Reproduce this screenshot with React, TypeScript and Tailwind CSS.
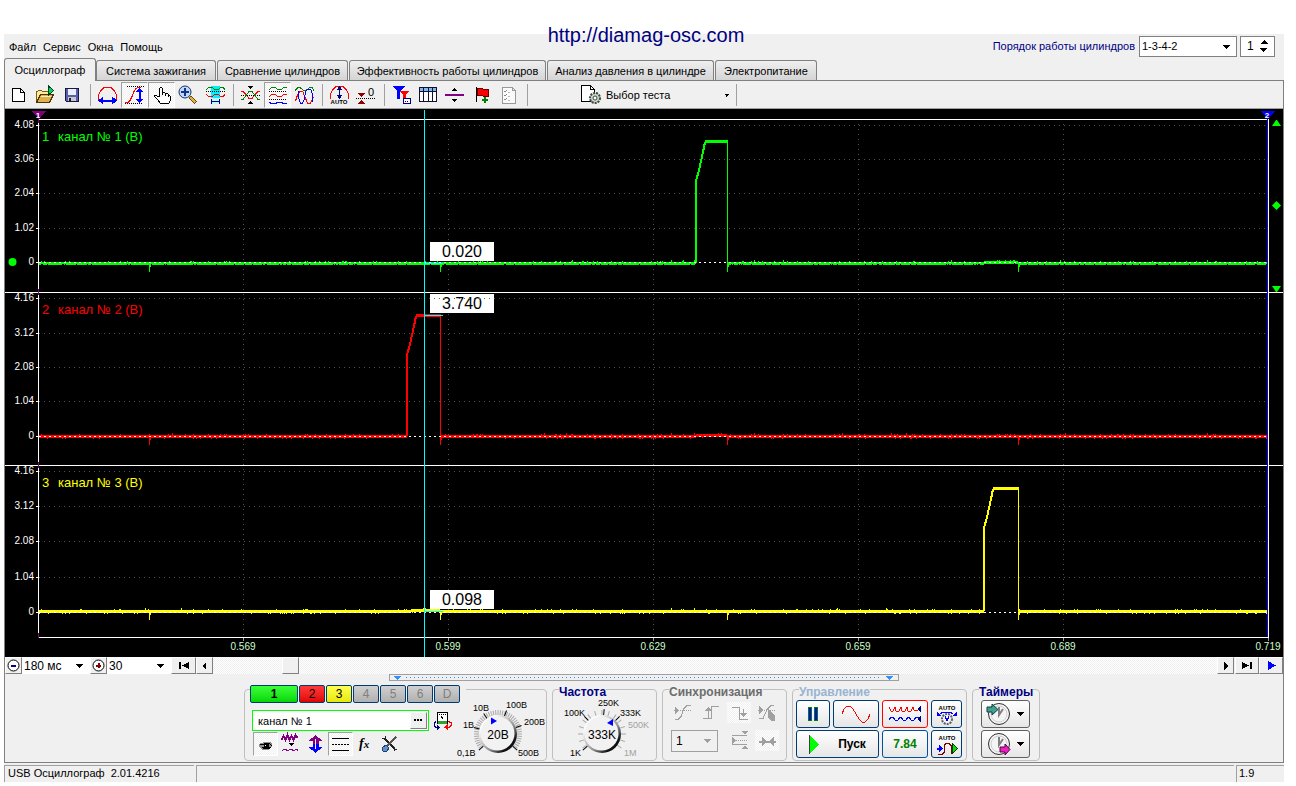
import React, { useState } from "react";

const CHECKER =
  "bg-[repeating-conic-gradient(#ffffff_0_25%,#f0f0f0_0_50%)] bg-[length:2px_2px]";

const tabs = [
  { label: "Осциллограф", width: "w-[92px]" },
  { label: "Система зажигания", width: "w-[120px]" },
  { label: "Сравнение цилиндров", width: "w-[131px]" },
  { label: "Эффективность работы цилиндров", width: "w-[197px]" },
  { label: "Анализ давления в цилиндре", width: "w-[167px]" },
  { label: "Электропитание", width: "w-[102px]" },
];

function Icon({ children, w = 27, h = 26 }: { children: React.ReactNode; w?: number; h?: number }) {
  return (
    <svg
      width={w}
      height={h}
      viewBox={`0 0 ${w} ${h}`}
      fill="none"
      stroke="#000"
      shapeRendering="crispEdges"
      aria-hidden="true"
      className="shrink-0"
    >
      {children}
    </svg>
  );
}

function Caret({ className = "" }: { className?: string }) {
  return (
    <svg width="8" height="4" viewBox="0 0 8 4" shapeRendering="crispEdges" className={className} aria-hidden="true">
      <path d="M0 0h7v1h-1v1h-1v1h-1v1h-1v-1h-1v-1h-1v-1h-1z" fill="currentColor" />
    </svg>
  );
}

/* ---------- toolbar ---------- */

const toolGroups: { name: string; pressed?: boolean; icon: React.ReactNode }[][] = [
  [
    {
      name: "Новый",
      icon: (
        <>
          <path d="M7.5 6.5h8l4 4v9h-12z" fill="#fff" />
          <path d="M15.5 6.5v4h4" />
        </>
      ),
    },
    {
      name: "Открыть",
      icon: (
        <>
          <path d="M4.5 20.5v-11h1l1-1h3l1 1h6v3" fill="#ffe9a0" stroke="#806000" />
          <path d="M4.5 20.5l4-8h13l-4 8z" fill="#e0b050" stroke="#4a3800" />
          <path d="M9 14.5h10" stroke="#fff0b0" />
          <path d="M16.5 4v9l5-4.5z" fill="#00d060" stroke="#004020" />
        </>
      ),
    },
    {
      name: "Сохранить",
      icon: (
        <>
          <path d="M6.5 6.5h13v13h-12l-1-1z" fill="#5560a8" stroke="#181840" />
          <path d="M9 7h8v6h-8z" fill="#e8f0ff" stroke="none" />
          <path d="M9 15h8v4h-8z" fill="#c8c8c8" stroke="none" />
          <path d="M10 16h2v3h-2z" fill="#181840" stroke="none" />
        </>
      ),
    },
  ],
  [
    {
      name: "Ширина",
      icon: (
        <>
          <path d="M4.5 18v-5l2-4 3-3 2-1h4l2 1 3 3 2 4v5" stroke="#f00" />
          <path d="M7 18.5h13" stroke="#00f" strokeWidth="2" />
          <path d="M4 18.5l5-4v8zM23 18.5l-5-4v8z" fill="#00f" stroke="none" />
        </>
      ),
    },
    {
      name: "Высота",
      pressed: true,
      icon: (
        <>
          <path d="M6 4.5h18M4 21.5h18" strokeDasharray="1 1" />
          <path d="M4 20.5h3l2-2 2-4 2-5 2-3 2-1h3" stroke="#f00" />
          <path d="M18.5 8v11" stroke="#00f" strokeWidth="2" />
          <path d="M18.5 6l-4 4h8zM18.5 21l-4-4h8z" fill="#00f" stroke="none" />
        </>
      ),
    },
    {
      name: "Рука",
      pressed: true,
      icon: (
        <path
          d="M11.5 15V6.500l1-1h1l1 1v6M14.5 10.5h2l1 1v2M17.5 11.5h2l1 1v2M20.5 13.5h1l1 1v4l-2 3h-8l-3-4-3-3v-1h2l3 2"
          fill="#fff"
        />
      ),
    },
    {
      name: "Лупа",
      icon: (
        <>
          <path d="M15 15l6 6" stroke="#6b4a10" strokeWidth="4" />
          <path d="M15.5 15.5l5 5" stroke="#e0b040" strokeWidth="2" />
          <circle cx="10" cy="10" r="6" fill="#b8dcff" stroke="#203060" shapeRendering="auto" />
          <path d="M10 6v8M6 10h8" stroke="#203080" strokeWidth="2" />
        </>
      ),
    },
    {
      name: "Окно",
      icon: (
        <>
          <path d="M9 4h9v12h-9z" fill="#00f0ff" stroke="none" />
          <path d="M9 16h9v6h-9z" fill="#c0f8ff" stroke="none" />
          <path d="M4 7.5l3-2h3l3 2h3l3-2h2l2 2" stroke="#008000" />
          <path d="M4 9.500h19" strokeDasharray="1 1" />
          <path d="M4 12.5l3 2h3l3-2h3l3 2h2l2-2" stroke="#f00" />
          <path d="M9.5 17v5M17.5 17v5M10 19.5h7" stroke="#000080" />
        </>
      ),
    },
  ],
  [
    {
      name: "Наложить",
      icon: (
        <>
          <path d="M4 13.5h19" strokeDasharray="1 1" />
          <path d="M4 9.5h2l3 3 3 4h3l3-4 3-3h2" stroke="#f00" />
          <path d="M4 17.500h2l3-4 3-4h3l3 4 3 4h2" stroke="#008000" />
          <path d="M11 4h5l-2.500 3zM11 22h5l-2.500-3z" fill="#000" stroke="none" />
        </>
      ),
    },
    {
      name: "Разделить",
      pressed: true,
      icon: (
        <>
          <path d="M5 7.5l3-2h3l3 2h3l3-2h3" stroke="#008000" />
          <path d="M5 9.5h18M5 17.5h18" strokeDasharray="1 1" />
          <path d="M5 14.5l3-2h3l3 2h3l3-2h3" stroke="#f00" />
          <path d="M5 20.5l3 1h3l3-1h3l3 1h3" stroke="#00f" />
        </>
      ),
    },
    {
      name: "Совместить",
      icon: (
        <>
          <path d="M4 8.5l3-3h2l4 3h2l4-3h2l2 3" stroke="#008000" />
          <path d="M4.5 19l2-6 3-4h2l2 5 3 7h3l3-6" stroke="#f00" />
          <path d="M7.5 9v7l2 5h2l2-4 1-7 2-3h3l2 5v8" stroke="#00f" />
        </>
      ),
    },
  ],
  [
    {
      name: "Авто",
      icon: (
        <>
          <path d="M4.5 17v-5l2-4 3-3 2-1h4l2 1 3 3 2 4v5" stroke="#f00" />
          <path d="M13.500 6v10" stroke="#000080" />
          <path d="M13.500 4l-3 4h6zM13.500 17l-3-4h6z" fill="#000080" stroke="none" />
          <text x="13" y="22" fontSize="6" fontWeight="700" textAnchor="middle" fill="#000" stroke="none">
            AUTO
          </text>
        </>
      ),
    },
    {
      name: "Ноль",
      icon: (
        <>
          <path d="M3 16.5h20" strokeDasharray="1 1" />
          <path d="M4 11h8l-4 4zM4 22h8l-4-4z" fill="#900000" stroke="none" />
          <text x="15" y="14" fontSize="11" fill="#000" stroke="none">
            0
          </text>
        </>
      ),
    },
  ],
  [
    {
      name: "Фильтр",
      icon: (
        <>
          <path d="M4 4h13l-5 5v8h-3v-8z" fill="#00f" stroke="none" />
          <path d="M12 9h9l-3 4v6h-3v-6z" fill="#f00" stroke="none" />
          <path d="M15.5 16.5h7v5h-7z" fill="#fff" stroke="#000080" />
          <path d="M17 19.5h4" stroke="#000080" strokeDasharray="1 1" />
        </>
      ),
    },
    {
      name: "Таблица",
      icon: (
        <>
          <path d="M4.5 5.5h17v14h-17z" fill="#fff" stroke="#101030" />
          <path d="M5 6h16v3h-16z" fill="#80b8f0" stroke="none" />
          <path d="M5 9.500h16M8.500 6v13M13.500 6v13M17.500 6v13" stroke="#101030" />
        </>
      ),
    },
    {
      name: "Линия",
      icon: (
        <>
          <path d="M3 12h19v2h-19z" fill="#800080" stroke="none" />
          <path d="M10 9h5l-2.500-3zM10 17h5l-2.500 3z" fill="#000" stroke="none" />
        </>
      ),
    },
    {
      name: "Метка",
      icon: (
        <>
          <path d="M7.5 5v15" />
          <path d="M8 6h4l2 1h5v7h-5l-2-1h-4z" fill="#f00" stroke="#600" />
          <path d="M16 15v6M13 18h6" stroke="#008000" strokeWidth="2" />
        </>
      ),
    },
    {
      name: "Список",
      icon: (
        <>
          <path d="M6.5 5.5h10l3 3v13h-13z" fill="#fafafa" stroke="#999" />
          <path d="M16.500 5.500v3h3" stroke="#999" />
          <path d="M8 9l1 1 2-2M8 13l1 1 2-2M8 17l1 1 2-2" stroke="#888" />
          <path d="M12 10.500h2M12 14.500h2M12 18.500h2" stroke="#bbb" />
        </>
      ),
    },
  ],
];

function Divider() {
  return (
    <span className="flex w-2 shrink-0 justify-center py-0.5">
      <span className="w-px bg-[#a0a0a0]" />
    </span>
  );
}

function Toolbar() {
  return (
    <div className="flex h-[28px] border-b border-[#a0a0a0] pt-px">
      {toolGroups.map((group, i) => (
        <React.Fragment key={i}>
          {group.map((tool) => (
            <button
              key={tool.name}
              type="button"
              aria-label={tool.name}
              className={
                tool.pressed
                  ? `flex w-[27px] items-center justify-center overflow-hidden border border-t-[#a0a0a0] border-r-white border-b-white border-l-[#a0a0a0] ${CHECKER}`
                  : "flex w-[27px] items-center justify-center overflow-hidden"
              }
            >
              <Icon>{tool.icon}</Icon>
            </button>
          ))}
          <Divider />
        </React.Fragment>
      ))}
      <button type="button" className="ml-12 flex w-[153px] items-center">
        <Icon>
          <path d="M2.5 3.5h9l4 4v12h-13z" fill="#fff" />
          <path d="M11.5 3.5v4h4" />
          <circle cx="16" cy="16" r="5" fill="#c8d8c8" stroke="#404840" strokeWidth="2" strokeDasharray="2 1" shapeRendering="auto" />
          <circle cx="16" cy="16" r="2" fill="#fff" stroke="#404840" shapeRendering="auto" />
        </Icon>
        <span className="flex-1 text-left">Выбор теста</span>
        <Caret className="mr-0.5 w-1.5" />
      </button>
      <Divider />
    </div>
  );
}

/* ---------- oscillogram ---------- */

type Channel = {
  id: number;
  color: string;
  zero: number;
  base: number;
  rise: number;
  fall: number;
  peak: number;
  titleY: number;
  grid: { y: number; label: string }[];
  bump: [number, number];
};

const channels: Channel[] = [
  {
    id: 1,
    color: "#00ff00",
    zero: 262,
    base: 263,
    rise: 695,
    fall: 727,
    peak: 141,
    titleY: 141,
    bump: [983, 1018],
    grid: [
      { y: 125, label: "4.08" },
      { y: 159, label: "3.06" },
      { y: 193, label: "2.04" },
      { y: 228, label: "1.02" },
    ],
  },
  {
    id: 2,
    color: "#ff0000",
    zero: 436,
    base: 436,
    rise: 406,
    fall: 440,
    peak: 315,
    titleY: 314,
    bump: [695, 727],
    grid: [
      { y: 298, label: "4.16" },
      { y: 333, label: "3.12" },
      { y: 367, label: "2.08" },
      { y: 401, label: "1.04" },
    ],
  },
  {
    id: 3,
    color: "#ffff00",
    zero: 612,
    base: 611,
    rise: 983,
    fall: 1018,
    peak: 488,
    titleY: 487,
    bump: [410, 440],
    grid: [
      { y: 471, label: "4.16" },
      { y: 506, label: "3.12" },
      { y: 541, label: "2.08" },
      { y: 577, label: "1.04" },
    ],
  },
];

const timeTicks = [
  { x: 243, label: "0.569" },
  { x: 448, label: "0.599" },
  { x: 653, label: "0.629" },
  { x: 858, label: "0.659" },
  { x: 1063, label: "0.689" },
  { x: 1268, label: "0.719" },
];

const readouts = [
  { y: 242, value: "0.020", mark: 263 },
  { y: 294, value: "3.740", mark: 315 },
  { y: 590, value: "0.098", mark: 611 },
];

const ignitions = [149, 440, 727, 1018];

function noisePath(ch: Channel) {
  let seed = ch.id * 7919;
  const rnd = () => {
    seed = (seed * 16807) % 2147483647;
    return seed / 2147483647;
  };
  let d = "";
  for (let x = 39; x < 1267; x++) {
    const up = rnd();
    const down = rnd();
    if (x > ch.rise && x < ch.fall) continue;
    const lift = x > ch.bump[0] && x < ch.bump[1] ? 1 : 0;
    let top = ch.base - 1 - lift;
    let bottom = ch.base + 2 - lift;
    if (up > 0.93) top -= 1;
    if (up > 0.99) top -= 1;
    if (down > 0.92) bottom += ch.id === 1 ? -1 : 1;
    d += `M${x}.5 ${top}V${bottom}`;
  }
  ignitions.forEach((x) => {
    d += `M${x}.5 ${ch.base}V${ch.base + 9}M${x + 1}.5 ${ch.base}V${ch.base + 4}`;
  });
  return d;
}

function pulsePath({ rise: x, base, peak }: Channel) {
  return `M${x + 1} ${base}V${peak + 40}l3 -11l2 -9l2 -9l2 -10`;
}

function Scope() {
  return (
    <svg
      viewBox="5 109 1278 548"
      className="block h-auto w-full bg-black"
      role="img"
      aria-label="Осциллограмма"
      shapeRendering="crispEdges"
    >
      {/* сетка */}
      <g stroke="#505050" strokeDasharray="1 4" fill="none">
        {channels.map((ch) => ch.grid.map((g) => <path key={`${ch.id}${g.y}`} d={`M39 ${g.y}.5H1267`} />))}
        {timeTicks.slice(0, 5).map((t) => (
          <path key={t.x} d={`M${t.x}.5 124V637`} />
        ))}
      </g>

      {channels.map((ch) => (
        <g key={ch.id}>
          <path d={noisePath(ch)} stroke={ch.color} fill="none" />
          <path d={pulsePath(ch)} stroke={ch.color} strokeWidth="2" fill="none" />
          <path d={`M${ch.rise + 10} ${ch.peak}.5H${ch.fall + 1}`} stroke={ch.color} strokeWidth="3" />
          <path d={`M${ch.rise + 11} ${ch.peak - 1}.5h6m3 0h2m4 0h1`} stroke={ch.color} />
          <path d={`M${ch.fall}.5 ${ch.peak}V${ch.base + 9}`} stroke={ch.color} />
          <path d={`M39 ${ch.zero}.5H1267`} stroke="#fff" strokeDasharray="2 3" />
          <text x="42" y={ch.titleY} fontSize="13" fill={ch.color}>
            {ch.id}
          </text>
          <text x="58" y={ch.titleY} fontSize="13" fill={ch.color}>
            канал № {ch.id} (В)
          </text>
          {[...ch.grid, { y: ch.zero, label: "0" }].map((g) => (
            <g key={g.label}>
              <path d={`M36 ${g.y}.5h2`} stroke="#fff" />
              <text x="34" y={g.y + 3} fontSize="10" textAnchor="end" fill="#fff">
                {g.label}
              </text>
            </g>
          ))}
        </g>
      ))}

      {/* рамки */}
      <path d="M38 119.500h1230M5 292.500h1278M5 465.500h1278M38 637.500h1230M38.500 119v518M1268.500 119v521" stroke="#fff" fill="none" />
      <path d="M1267.500 117v520" stroke="#0000ff" />
      <path d="M38.500 115v8M38.500 289v6M38.500 462v6M38.500 633v5" stroke="#800080" />
      {timeTicks.map((t) => (
        <g key={t.x}>
          <path d={`M${t.x}.5 638v3`} stroke="#a0a0a0" />
          <text x={t.x} y="650" fontSize="10" textAnchor="middle" fill="#ccffcc">
            {t.label}
          </text>
        </g>
      ))}

      {/* курсор и показания */}
      <path d="M424.500 110v547" stroke="#00ffff" />
      {readouts.map((r) => (
        <g key={r.value}>
          <path d={`M424 ${r.mark}.5h19`} stroke="#00ffff" />
          <rect x="430" y={r.y} width="64" height="19" fill="#fff" />
          <text x="462" y={r.y + 15} fontSize="16" textAnchor="middle" fill="#000">
            {r.value}
          </text>
        </g>
      ))}
      <path d="M434 298.500h60" stroke="#606060" strokeDasharray="1 4" />

      <path d="M31 111h15l-7 7h-1z" fill="#800080" />
      <text x="38" y="118" fontSize="8" fontWeight="700" textAnchor="middle" fill="#fff">
        1
      </text>
      <path d="M1260 111h15l-7 7h-1z" fill="#0000ff" />
      <text x="1267" y="118" fontSize="8" fontWeight="700" textAnchor="middle" fill="#fff">
        2
      </text>
      <g fill="#00ff00" shapeRendering="auto">
        <path d="M1272 126h9l-4-6h-1zM1272 286h9l-4 6h-1zM1272 205.500l4.500-4.500 4.500 4.500-4.500 4.500z" />
        <circle cx="12.500" cy="262" r="4" />
      </g>
    </svg>
  );
}

/* ---------- scroll strip ---------- */

const RAISED =
  "flex items-center justify-center border border-t-white border-l-white border-r-[#808080] border-b-[#808080] bg-[#f0f0f0]";

function ZoomSelect({ label, value, width }: { label: string; value: string; width: string }) {
  return (
    <label className={`relative ${width} bg-white text-xs`}>
      <select aria-label={label} className="h-full w-full appearance-none pl-0.5 outline-none">
        <option>{value}</option>
      </select>
      <Caret className="pointer-events-none absolute top-[7px] right-1.5" />
    </label>
  );
}

function ScrollStrip() {
  return (
    <div className="flex h-[17px]">
      <button type="button" aria-label="Уменьшить" className={`w-[17px] ${RAISED}`}>
        <Icon w={13} h={13}>
          <circle cx="6.5" cy="6.5" r="5.500" fill="#fff" shapeRendering="auto" />
          <path d="M4 6.500h5" stroke="#000080" strokeWidth="2" />
        </Icon>
      </button>
      <ZoomSelect label="Развёртка" value="180 мс" width="w-[68px]" />
      <button type="button" aria-label="Увеличить" className={`w-[17px] ${RAISED}`}>
        <Icon w={13} h={13}>
          <circle cx="6.5" cy="6.5" r="5.500" fill="#fff" shapeRendering="auto" />
          <path d="M4 6.500h5M6.500 4v5" stroke="#800000" strokeWidth="2" />
        </Icon>
      </button>
      <ZoomSelect label="Масштаб" value="30" width="w-[64px]" />
      <button type="button" aria-label="В начало" className={`w-[25px] ${RAISED}`}>
        <Icon w={12} h={9}>
          <path d="M1 1h2v7h-2zM11 1v7l-7-3.500z" fill="#000" stroke="none" />
        </Icon>
      </button>
      <button type="button" aria-label="Назад" className={`w-[17px] ${RAISED}`}>
        <Icon w={5} h={8}>
          <path d="M4 0v8l-4-4z" fill="#000" stroke="none" />
        </Icon>
      </button>
      <div className={`flex flex-1 ${CHECKER}`}>
        <div className={`ml-[69px] w-[17px] ${RAISED}`} />
      </div>
      <button type="button" aria-label="Вперёд" className={`w-[17px] ${RAISED}`}>
        <Icon w={5} h={8}>
          <path d="M1 0v8l4-4z" fill="#000" stroke="none" />
        </Icon>
      </button>
      <button type="button" aria-label="В конец" className={`ml-px w-[24px] ${RAISED}`}>
        <Icon w={12} h={9}>
          <path d="M9 1h2v7h-2zM1 1v7l7-3.500z" fill="#000" stroke="none" />
        </Icon>
      </button>
      <button type="button" aria-label="Воспроизвести" className={`w-[24px] ${RAISED}`}>
        <Icon w={9} h={9}>
          <path d="M1 0v9l8-4.500z" fill="#00f" stroke="none" />
        </Icon>
      </button>
    </div>
  );
}

/* ---------- control panels ---------- */

function Panel({
  title,
  tone = "text-[#000080]",
  width,
  children,
}: {
  title?: string;
  tone?: string;
  width: string;
  children: React.ReactNode;
}) {
  return (
    <fieldset className={`relative ${width} min-w-0 shrink-0 rounded-sm border border-[#c0c0c0]`}>
      {title && <legend className={`absolute -top-1 left-1.5 bg-[#f0f0f0] text-xs leading-3 font-bold ${tone}`}>{title}</legend>}
      {children}
    </fieldset>
  );
}

const channelButtons = [
  { label: "1", style: "w-12 bg-linear-to-b from-[#38ff38] to-[#00d800] font-bold text-black" },
  { label: "2", style: "w-[26px] bg-linear-to-b from-[#ff3838] to-[#e00000] text-black" },
  { label: "3", style: "w-[26px] bg-linear-to-b from-[#ffff48] to-[#e8e800] text-black" },
  { label: "4", style: "w-[26px] bg-linear-to-b from-[#d0d0d0] to-[#b0b0b0] text-[#808080]" },
  { label: "5", style: "w-[26px] bg-linear-to-b from-[#d0d0d0] to-[#b0b0b0] text-[#808080]" },
  { label: "6", style: "w-[26px] bg-linear-to-b from-[#d0d0d0] to-[#b0b0b0] text-[#808080]" },
  { label: "D", style: "w-[26px] bg-linear-to-b from-[#d0d0d0] to-[#b0b0b0] text-[#808080]" },
];

const channelTools: { name: string; pressed?: boolean; icon: React.ReactNode }[] = [
  {
    name: "Видимость",
    pressed: true,
    icon: (
      <>
        <path d="M7 11h2l2-1h6l2 1v3l-1 2-3 2h-5l-3-2-1-2z" fill="#909090" stroke="none" />
        <path d="M7 12.500h3l2-1h4l3 2M9 15.500l3 1h3l3-1" />
        <path d="M11 12h5v4h-5z" fill="#000" stroke="none" />
        <path d="M12 13h1v1h-1z" fill="#fff" stroke="none" />
      </>
    ),
  },
  {
    name: "Сглаживание",
    icon: (
      <>
        <path d="M3.500 8l2-4 2 4 2-5 2 5 2-4 2 4 2-5 2 3" stroke="#800080" strokeWidth="2" />
        <path d="M10 11h6l-3 3z" fill="#000" stroke="none" />
        <path d="M4 19l2-2h1l3 2 2-2h1l3 2 2-2h1l1 2" stroke="#800080" />
      </>
    ),
  },
  {
    name: "Смещение",
    icon: (
      <>
        <path d="M12.500 3l7 6h-4v3h-6v-3h-4z" fill="#800080" stroke="none" />
        <path d="M12.500 21l7-6h-4v-3h-6v3h-4z" fill="#00f" stroke="none" />
        <path d="M12.500 7v10" stroke="#f0f0f0" />
      </>
    ),
  },
  {
    name: "Уровни",
    pressed: true,
    icon: (
      <>
        <path d="M4 6.500h17M4 18.500h17" />
        <path d="M4 12.500h17" strokeDasharray="2 1" />
      </>
    ),
  },
  {
    name: "Функция",
    icon: (
      <text x="6" y="16" fontSize="14" fontStyle="italic" fontWeight="700" fontFamily="Liberation Serif, serif" fill="#000" stroke="none">
        f<tspan fontSize="11">x</tspan>
      </text>
    ),
  },
  {
    name: "Настройки",
    icon: (
      <>
        <path d="M7 7l10 10" stroke="#222" strokeWidth="2" />
        <path d="M18 5l-9 9" stroke="#555" strokeWidth="2" />
        <path d="M4 6h3v-2M16 19v-2h3" stroke="#222" />
        <path d="M5 15l3-2 3 3-2 3-3 1-2-2z" fill="#6090d0" stroke="#204070" />
      </>
    ),
  },
];

function Dial({
  cx,
  from,
  width,
  value,
  step,
  labels,
  marks,
  pointer,
}: {
  cx: number;
  from: number;
  width: number;
  value: string;
  step: number;
  labels: { x: number; y: number; t: string; off?: boolean }[];
  marks: number[];
  pointer: string;
}) {
  const cy = 734;
  const ticks: React.ReactNode[] = [];
  for (let a = -126; a <= 126; a += step) {
    ticks.push(<path key={a} d={`M${cx} ${cy - 24}v5`} transform={`rotate(${a} ${cx} ${cy})`} stroke="#a8a8a8" />);
  }
  return (
    <svg width={width} height="70" viewBox={`${from} 690 ${width} 70`} className="shrink-0" role="img" aria-label={value}>
      <defs>
        <linearGradient id={`rim${cx}`} x1="0" y1="0" x2="1" y2="1">
          <stop offset="0.2" stopColor="#ffffff" />
          <stop offset="0.6" stopColor="#909090" />
          <stop offset="0.8" stopColor="#101010" />
        </linearGradient>
      </defs>
      {ticks}
      {marks.map((a) => (
        <path key={a} d={`M${cx} ${cy - 25}v6`} transform={`rotate(${a} ${cx} ${cy})`} stroke="#000" />
      ))}
      <circle cx={cx} cy={cy} r="19" fill={`url(#rim${cx})`} />
      <circle cx={cx - 0.5} cy={cy - 0.5} r="17" fill="#f2f2f2" />
      <path d={pointer} fill="#0000ff" />
      <text x={cx} y={cy + 5} fontSize="12" textAnchor="middle">
        {value}
      </text>
      {labels.map((l) => (
        <text key={l.t} x={l.x} y={l.y} fontSize="9" fill={l.off ? "#a0a0a0" : "#000"}>
          {l.t}
        </text>
      ))}
    </svg>
  );
}

function ChannelPanel() {
  const [name, setName] = useState("канал № 1");
  return (
    <Panel width="w-[303px]">
      <div className="absolute -top-[5px] left-[5px] flex gap-px bg-[#f0f0f0] pr-1.5 text-xs">
        {channelButtons.map((b) => (
          <button key={b.label} type="button" className={`h-[18px] rounded-[2px] border border-[#003c74] leading-4 ${b.style}`}>
            {b.label}
          </button>
        ))}
      </div>
      <div className="flex">
        <div className="w-[208px] pt-5 pl-[7px]">
          <div className="flex items-center gap-1">
            <div className="flex h-[21px] w-[177px] border border-[#00ff00] bg-white p-px">
              <input
                aria-label="Название канала"
                value={name}
                onChange={(e) => setName(e.target.value)}
                className="min-w-0 flex-1 pl-1 outline-none"
              />
              <button type="button" aria-label="Выбрать канал" className={`w-[17px] ${RAISED}`}>
                <Icon w={9} h={3}>
                  <path d="M0 1h2m1 0h2m1 0h2" strokeWidth="2" />
                </Icon>
              </button>
            </div>
            <button type="button" aria-label="Подключение">
              <Icon w={19} h={19}>
                <path d="M4.500 1.500h10v11h-10z" fill="#fff" />
                <path d="M5 10h9v3h-9z" fill="#30a030" stroke="none" />
                <path d="M6 3.500h8" strokeDasharray="1 1" />
                <path d="M8 5l2 3" />
                <path d="M3 10.500l-2 2v2l2 2h2" stroke="#000080" />
                <path d="M4 13v6l3-2.500z" fill="#000080" stroke="none" />
                <path d="M15 10.500l3 1v3l-2 2h-2" stroke="#f00" />
                <path d="M15 13v6l-4-2.500z" fill="#f00" stroke="none" />
              </Icon>
            </button>
          </div>
          <div className="mt-px flex pl-px">
            {channelTools.map((tool) => (
              <button
                key={tool.name}
                type="button"
                aria-label={tool.name}
                className={
                  tool.pressed
                    ? `flex h-6 w-[25px] items-center justify-center overflow-hidden border border-t-[#a0a0a0] border-r-white border-b-white border-l-[#a0a0a0] ${CHECKER}`
                    : "flex h-6 w-[25px] items-center justify-center overflow-hidden"
                }
              >
                <Icon w={25} h={24}>
                  {tool.icon}
                </Icon>
              </button>
            ))}
          </div>
        </div>
        <Dial
          cx={498}
          from={453}
          width={93}
          value="20В"
          step={6}
          marks={[-130, -75, -35, 20, 70, 130]}
          pointer="M491 717.500l6 3.500-6 3.500z"
          labels={[
            { x: 457, y: 756, t: "0,1В" },
            { x: 463, y: 728, t: "1В" },
            { x: 473, y: 711, t: "10В" },
            { x: 506, y: 708, t: "100В" },
            { x: 524, y: 725, t: "200В" },
            { x: 518, y: 756, t: "500В" },
          ]}
        />
      </div>
    </Panel>
  );
}

function FrequencyPanel() {
  return (
    <Panel title="Частота" width="w-[105px]">
      <Dial
        cx={602}
        from={553}
        width={103}
        value="333K"
        step={18}
        marks={[-130, -45, 5, 45]}
        pointer="M613 719v7l-6-3z"
        labels={[
          { x: 570, y: 756, t: "1K" },
          { x: 564, y: 716, t: "100K" },
          { x: 598, y: 706, t: "250K" },
          { x: 620, y: 716, t: "333K" },
          { x: 628, y: 728, t: "500K", off: true },
          { x: 624, y: 756, t: "1M", off: true },
        ]}
      />
    </Panel>
  );
}

function SyncButton({ name, pressed, children }: { name: string; pressed?: boolean; children: React.ReactNode }) {
  return (
    <button type="button" disabled aria-label={name} className={pressed ? `h-[21px] w-6 ${CHECKER}` : "h-[21px] w-6"}>
      <svg width="24" height="21" viewBox="0 0 24 21" fill="none" stroke="#a0a0a0" shapeRendering="crispEdges" aria-hidden="true">
        {children}
      </svg>
    </button>
  );
}

function SyncPanel() {
  return (
    <Panel title="Синхронизация" tone="text-[#6d6d6d]" width="w-[125px]">
      <div className="grid grid-cols-[repeat(4,24px)] gap-x-1 gap-y-[7px] pt-3 pl-2">
        <SyncButton name="Уровень">
          <path d="M3 8.500h18" strokeDasharray="1 1" />
          <path d="M4 17.500h3l3-3 3-8 3-3h4" />
          <path d="M4 5v7l4-3.500z" fill="#a0a0a0" stroke="none" />
        </SyncButton>
        <SyncButton name="Фронт">
          <path d="M4 16.500h8v-12h8" />
          <path d="M9.500 8v8" />
          <path d="M6 9h7l-3.500-4z" fill="#a0a0a0" stroke="none" />
        </SyncButton>
        <SyncButton name="Спад" pressed>
          <path d="M5 5.500h7v12h9M16.500 7v6" />
          <path d="M13 11h7l-3.500 4z" fill="#a0a0a0" stroke="none" />
        </SyncButton>
        <SyncButton name="Вручную">
          <path d="M3 8.500h18" strokeDasharray="1 1" />
          <path d="M4 16.500h4l4-9 4-4h3" />
          <path d="M4 4v8l5-4zM13 7v9l3 3h4v-6z" fill="#a0a0a0" stroke="none" />
        </SyncButton>
        <label className="relative col-span-2 w-[47px] text-black">
          <select disabled aria-label="Канал синхронизации" className="h-[22px] w-full appearance-none border border-[#a0a0a0] pl-1 text-xs opacity-100">
            <option>1</option>
          </select>
          <Caret className="pointer-events-none absolute top-[9px] right-1.5 text-[#a0a0a0]" />
        </label>
        <SyncButton name="Диапазон">
          <path d="M5 5.500h15M5 14.500h15" />
          <path d="M5 10.500h15" strokeDasharray="1 1" />
          <path d="M5 7v7l4-3.500zM15 1h6l-3 3.500zM15 19h6l-3-3.500z" fill="#a0a0a0" stroke="none" />
        </SyncButton>
        <SyncButton name="Сжать" pressed>
          <path d="M4 11.500h17" strokeWidth="2" />
          <path d="M7 7v9l5-4.500zM19 7v9l-5-4.500z" fill="#a0a0a0" stroke="none" />
        </SyncButton>
      </div>
    </Panel>
  );
}

const BUTTON =
  "flex h-7 shrink-0 items-center justify-center rounded-[3px] border bg-linear-to-b from-white to-[#e6e6e6]";

function AutoLabel() {
  return (
    <text x="14" y="8" fontSize="6" fontWeight="700" textAnchor="middle" fill="#000" stroke="none">
      AUTO
    </text>
  );
}

function RunPanel() {
  return (
    <Panel title="Управление" tone="text-[#99b4d1]" width="w-[175px]">
      <div className="flex gap-[3px] pt-2.5 pl-[3px]">
        <div className="flex w-[83px] flex-wrap gap-x-[3px] gap-y-0.5">
          <button type="button" aria-label="Пауза" className={`w-[34px] border-[#003c74] ${BUTTON}`}>
            <Icon w={12} h={16}>
              <path d="M1.500 1.500h3v13h-3zM7.500 1.500h3v13h-3z" fill="#00f" stroke="#008000" />
            </Icon>
          </button>
          <button type="button" aria-label="Синус" className={`w-[46px] border-[#003c74] ${BUTTON}`}>
            <Icon w={30} h={20}>
              <path d="M1 10l2-5 3-3h3l3 3 3 5 3 5 3 3h3l3-3 2-5" stroke="#f00" />
            </Icon>
          </button>
          <button type="button" className={`w-[83px] gap-[18px] border-[#003c74] text-xs font-bold ${BUTTON}`}>
            <Icon w={11} h={19}>
              <path d="M0.500 0v19l10-9.500z" fill="#00ff00" stroke="none" />
              <path d="M0.500 0v19" stroke="#404040" />
            </Icon>
            Пуск
          </button>
        </div>
        <div className="flex flex-col gap-0.5">
          <button type="button" aria-label="Сигналы" className={`w-[46px] border-[#ff0000] ${BUTTON}`}>
            <Icon w={34} h={20}>
              <path d="M1 3l2 4h2l2-4 1 4h3l2-4 1 4h3l2-4 1 4h3l2-4 1 3h4" stroke="#f00" />
              <path d="M1 16l2-3h2l2 3h3l2-3h1l2 3h3l2-3h1l2 3h3l2-3h4" stroke="#00f" />
              <path d="M33 2v6l-4-3zM33 12v6l-4-3z" fill="#000080" stroke="none" />
            </Icon>
          </button>
          <button type="button" className={`w-[46px] border-[#0050a0] text-xs font-bold text-[#008000] ${BUTTON}`}>
            7.84
          </button>
        </div>
        <div className="flex flex-col gap-0.5">
          <button type="button" aria-label="Автоусиление" className={`w-[31px] border-[#003c74] ${BUTTON}`}>
            <Icon w={27} h={24}>
              <AutoLabel />
              <path d="M7 12l3-2h7l3 2" stroke="#00f" />
              <path d="M4 9v5h4zM24 9v5h-4z" fill="#00f" stroke="none" />
              <circle cx="14" cy="17" r="5" fill="#f4f4f4" stroke="#606060" strokeWidth="2" strokeDasharray="2 1" shapeRendering="auto" />
              <path d="M12 14l2 5 2-5" stroke="#00f" />
            </Icon>
          </button>
          <button type="button" aria-label="Автозапуск" className={`w-[31px] border-[#003c74] ${BUTTON}`}>
            <Icon w={27} h={24}>
              <AutoLabel />
              <path d="M4 16.500h4" stroke="#00f" strokeWidth="2" />
              <path d="M6 12v9l4-4.500z" fill="#00f" stroke="none" />
              <path d="M5 22.500h4l2-2v-7l2-2h3l2 2v7l1 1" stroke="#800000" />
              <path d="M19.500 11.500v10l5-5z" fill="#00e000" stroke="#004000" />
            </Icon>
          </button>
        </div>
      </div>
    </Panel>
  );
}

function TimersPanel() {
  return (
    <Panel title="Таймеры" width="w-[68px]">
      <div className="flex flex-col gap-0.5 pt-2.5 pl-2">
        {["Таймер запуска", "Таймер остановки"].map((label, i) => (
          <button key={label} type="button" aria-label={label} className={`w-[49px] gap-1.5 border-[#606060] ${BUTTON}`}>
            <svg width="25" height="24" viewBox="0 0 25 24" fill="none" aria-hidden="true">
              <circle cx="13" cy="12" r="10.500" fill="#f4f4f4" stroke="#303030" />
              <circle cx="13" cy="12" r="8" stroke="#d0d0d0" />
              <path d="M13 5v8l4-6" stroke="#808080" strokeWidth="2" />
              {i === 0 ? (
                <path d="M1 5h5V2l6 5.500-6 5.500v-3H1z" fill="#40a090" stroke="#104038" />
              ) : (
                <path d="M14 15h5v-3l5 5.500-5 5.500v-3h-5z" fill="#f020c0" stroke="#500040" />
              )}
            </svg>
            <Caret />
          </button>
        ))}
      </div>
    </Panel>
  );
}

export default function App() {
  const [tab, setTab] = useState(0);
  return (
    <div className="relative bg-white pt-[34px] pr-3 pl-1 font-['Liberation_Sans',Arial,sans-serif] text-[11px] leading-[14px] text-black">
      <a
        href="http://diamag-osc.com"
        className="absolute inset-x-0 top-[23px] mx-auto w-fit pr-1 text-xl leading-6 whitespace-nowrap text-[#000080]"
      >
        http://diamag-osc.com
      </a>
      <div className="bg-[#f0f0f0]">
        <header className="flex h-6 items-center justify-between pr-[9px] pl-[5px]">
          <nav className="flex gap-[7px] pt-0.5">
            <a href="#file">Файл</a>
            <a href="#service">Сервис</a>
            <a href="#windows">Окна</a>
            <a href="#help">Помощь</a>
          </nav>
          <div className="flex items-center">
            <label htmlFor="order" className="mr-1 text-[#000080]">
              Порядок работы цилиндров
            </label>
            <div className="relative mr-[3px] w-[98px]">
              <select id="order" className="h-[21px] w-full appearance-none border border-[#808080] bg-white pl-0.5 outline-none">
                <option>1-3-4-2</option>
              </select>
              <Caret className="pointer-events-none absolute top-[9px] right-1.5" />
            </div>
            <div className="flex h-[21px] w-[35px] items-center border border-[#808080] bg-white">
              <input aria-label="Цилиндр" defaultValue="1" className="w-4 flex-1 pl-1.5 text-xs outline-none" />
              <div className="flex flex-col gap-1 pr-1.5">
                <button type="button" aria-label="Больше">
                  <Caret className="rotate-180" />
                </button>
                <button type="button" aria-label="Меньше">
                  <Caret />
                </button>
              </div>
            </div>
          </div>
        </header>

        <div role="tablist" className="flex h-[22px] items-end">
          {tabs.map((t, i) => (
            <button
              key={t.label}
              type="button"
              role="tab"
              aria-selected={tab === i}
              onClick={() => setTab(i)}
              className={
                tab === i
                  ? `mb-[-1px] h-[23px] rounded-t-[3px] border border-b-0 border-[#808080] bg-[#f0f0f0] whitespace-nowrap ${t.width}`
                  : `mr-0.5 h-5 rounded-t-[3px] border border-b-0 border-[#808080] bg-linear-to-b from-[#f0f0f0] to-[#d4d4d4] whitespace-nowrap ${t.width} ${i > 1 ? "-ml-px" : ""}`
              }
            >
              {t.label}
            </button>
          ))}
        </div>

        <main className="border border-[#808080]">
          <Toolbar />
          <Scope />
          <ScrollStrip />
          <div className="mx-auto flex h-[7px] w-[510px] items-center gap-1 border border-[#a0a0a0] px-1 text-[#3090ff]">
            <Caret />
            <span className="h-px flex-1 bg-[repeating-linear-gradient(90deg,#3090ff_0_1px,transparent_1px_4px)]" />
            <Caret />
          </div>
          <div className="flex h-[81px] items-stretch justify-center gap-[5px] pt-2 pr-1 pb-px">
            <ChannelPanel />
            <FrequencyPanel />
            <SyncPanel />
            <RunPanel />
            <TimersPanel />
          </div>
        </main>

        <footer className="flex gap-0.5 pt-0.5">
          <div className="h-[17px] w-[190px] border-t border-l border-[#a0a0a0] pl-[3px] whitespace-pre">
            USB Осциллограф{"  "}2.01.4216
          </div>
          <div className="h-[17px] flex-1 border-t border-l border-[#a0a0a0]" />
          <div className="h-[17px] w-12 border-t border-l border-[#a0a0a0] pl-0.5">1.9</div>
        </footer>
      </div>
    </div>
  );
}
